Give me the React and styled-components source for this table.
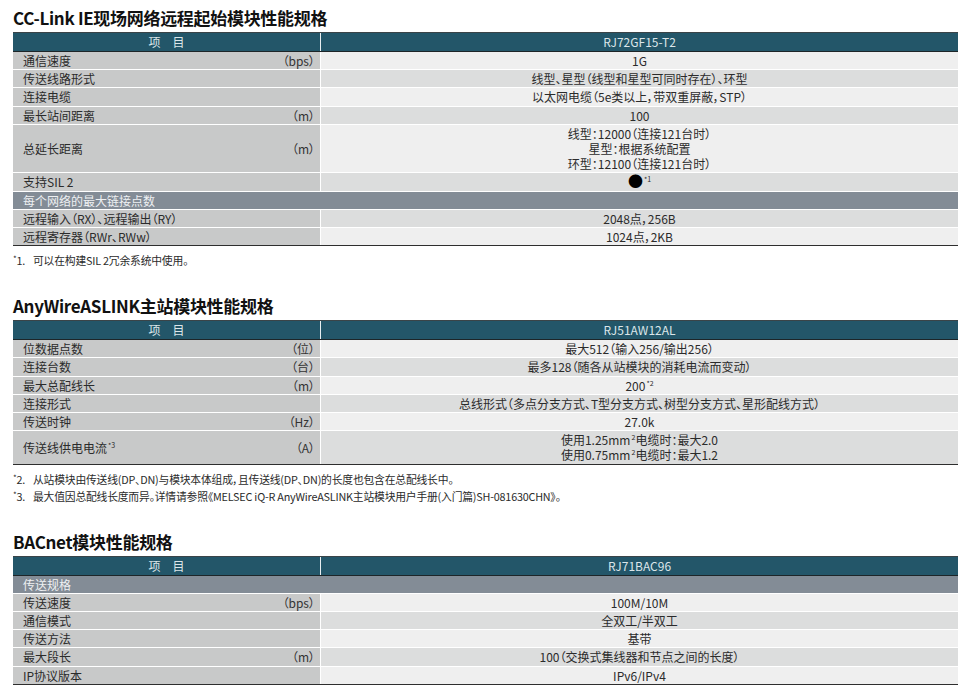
import React from "react";
import styled, { createGlobalStyle } from "styled-components";

const GlobalStyle = createGlobalStyle`
  body {
    margin: 0;
    background: #fff;
    font-family: "Noto Sans CJK SC", "Noto Sans", sans-serif;
    font-feature-settings: "palt";
    color: #2b2b2b;
  }
`;

const Page = styled.div`
  padding: 7px 12px 0 13px;
  display: flex;
  flex-direction: column;
  gap: 27px;
`;

const Section = styled.section`
  display: flex;
  flex-direction: column;
`;

const Title = styled.h2`
  margin: 0 0 3px;
  font-size: 17px;
  line-height: 22px;
  font-weight: 700;
  color: #111;
  letter-spacing: -0.3px;
`;

const Table = styled.div`
  display: flex;
  flex-direction: column;
  font-size: 12px;
`;

const HeadRow = styled.div`
  display: grid;
  grid-template-columns: 307px 1fr;
  column-gap: 1px;
  background: #e8eef0;
  border-top: 1px solid #3a4448;
  border-bottom: 1px solid #1d2528;
`;

const HeadCell = styled.div`
  background: #235669;
  color: #dce6ea;
  text-align: center;
  line-height: 18px;
`;

const Body = styled.div`
  display: flex;
  flex-direction: column;
  gap: 1px;
  background: #fff;
  border-bottom: 1.5px solid #2e2e2e;
`;

const Row = styled.div`
  display: grid;
  grid-template-columns: 307px 1fr;
  column-gap: 1px;
`;

const LabelCell = styled.div`
  display: flex;
  align-items: center;
  justify-content: space-between;
  padding: 1px 5px 1px 10px;
  line-height: 15.2px;
  background: #c8c9c9;
  color: #2b2b2b;
`;

const Unit = styled.span`
  color: #333;
`;

const ValueCell = styled.div`
  display: flex;
  flex-direction: column;
  justify-content: center;
  align-items: center;
  padding: 1px 8px;
  line-height: 15.2px;
  background: ${(p) => (p.$shade === "dark" ? "#dcdddd" : "#efefef")};
  color: #2b2b2b;
`;

const GroupRow = styled.div`
  padding: 1px 10px;
  line-height: 15.2px;
  background: #838c96;
  color: #eef0f2;
`;

const Sup = styled.sup`
  font-size: 7px;
  line-height: 0;
  vertical-align: 5px;
  margin-left: 1px;
`;

const Dot = styled.span`
  font-size: 15px;
  color: #000;
  line-height: 0;
`;

const Notes = styled.div`
  margin-top: 5px;
  display: flex;
  flex-direction: column;
`;

const Note = styled.div`
  font-size: 10.8px;
  line-height: 15px;
  letter-spacing: -0.2px;
  color: #2b2b2b;
`;

const NoteMark = styled.span`
  display: inline-block;
  width: 20px;
`;

const Star = styled.span`
  font-size: 8px;
  vertical-align: 3px;
`;

const sections = [
  {
    title: "CC-Link IE现场网络远程起始模块性能规格",
    model: "RJ72GF15-T2",
    rows: [
      { label: "通信速度", unit: "（bps）", value: ["1G"], shade: "light" },
      { label: "传送线路形式", value: ["线型、星型（线型和星型可同时存在）、环型"], shade: "dark" },
      { label: "连接电缆", value: ["以太网电缆（5e类以上，带双重屏蔽，STP）"], shade: "light" },
      { label: "最长站间距离", unit: "（m）", value: ["100"], shade: "dark" },
      {
        label: "总延长距离",
        unit: "（m）",
        value: ["线型：12000（连接121台时）", "星型：根据系统配置", "环型：12100（连接121台时）"],
        shade: "light",
      },
      { label: "支持SIL 2", value: [<><Dot>●</Dot><Sup>*1</Sup></>], shade: "dark" },
      { group: "每个网络的最大链接点数" },
      { label: "远程输入（RX）、远程输出（RY）", value: ["2048点，256B"], shade: "dark" },
      { label: "远程寄存器（RWr、RWw）", value: ["1024点，2KB"], shade: "light" },
    ],
    notes: [{ mark: "1", text: "可以在构建SIL 2冗余系统中使用。" }],
  },
  {
    title: "AnyWireASLINK主站模块性能规格",
    model: "RJ51AW12AL",
    rows: [
      { label: "位数据点数", unit: "（位）", value: ["最大512（输入256/输出256）"], shade: "light" },
      { label: "连接台数", unit: "（台）", value: ["最多128（随各从站模块的消耗电流而变动）"], shade: "dark" },
      { label: "最大总配线长", unit: "（m）", value: [<>200<Sup>*2</Sup></>], shade: "light" },
      {
        label: "连接形式",
        value: ["总线形式（多点分支方式、T型分支方式、树型分支方式、星形配线方式）"],
        shade: "dark",
      },
      { label: "传送时钟", unit: "（Hz）", value: ["27.0k"], shade: "light" },
      {
        label: <>传送线供电电流<Sup>*3</Sup></>,
        unit: "（A）",
        value: [
          <>使用1.25mm<Sup>2</Sup>电缆时：最大2.0</>,
          <>使用0.75mm<Sup>2</Sup>电缆时：最大1.2</>,
        ],
        shade: "dark",
      },
    ],
    notes: [
      { mark: "2", text: "从站模块由传送线(DP、DN)与模块本体组成，且传送线(DP、DN)的长度也包含在总配线长中。" },
      {
        mark: "3",
        text: "最大值因总配线长度而异。详情请参照《MELSEC iQ-R AnyWireASLINK主站模块用户手册(入门篇)SH-081630CHN》。",
      },
    ],
  },
  {
    title: "BACnet模块性能规格",
    model: "RJ71BAC96",
    rows: [
      { group: "传送规格" },
      { label: "传送速度", unit: "（bps）", value: ["100M/10M"], shade: "light" },
      { label: "通信模式", value: ["全双工/半双工"], shade: "dark" },
      { label: "传送方法", value: ["基带"], shade: "light" },
      { label: "最大段长", unit: "（m）", value: ["100（交换式集线器和节点之间的长度）"], shade: "dark" },
      { label: "IP协议版本", value: ["IPv6/IPv4"], shade: "light" },
    ],
    notes: [],
  },
];

const App = () => {
  return (
    <Page>
      <GlobalStyle />
      {sections.map((s, i) => (
        <Section key={i}>
          <Title>{s.title}</Title>
          <Table>
            <HeadRow>
              <HeadCell>项　目</HeadCell>
              <HeadCell>{s.model}</HeadCell>
            </HeadRow>
            <Body>
              {s.rows.map((r, j) =>
                r.group ? (
                  <GroupRow key={j}>{r.group}</GroupRow>
                ) : (
                  <Row key={j}>
                    <LabelCell>
                      <span>{r.label}</span>
                      {r.unit && <Unit>{r.unit}</Unit>}
                    </LabelCell>
                    <ValueCell $shade={r.shade}>
                      {r.value.map((line, k) => (
                        <div key={k}>{line}</div>
                      ))}
                    </ValueCell>
                  </Row>
                )
              )}
            </Body>
          </Table>
          {s.notes.length > 0 && (
            <Notes>
              {s.notes.map((n) => (
                <Note key={n.mark}>
                  <NoteMark>
                    <Star>*</Star>
                    {n.mark}.
                  </NoteMark>
                  {n.text}
                </Note>
              ))}
            </Notes>
          )}
        </Section>
      ))}
    </Page>
  );
};

export default App;
